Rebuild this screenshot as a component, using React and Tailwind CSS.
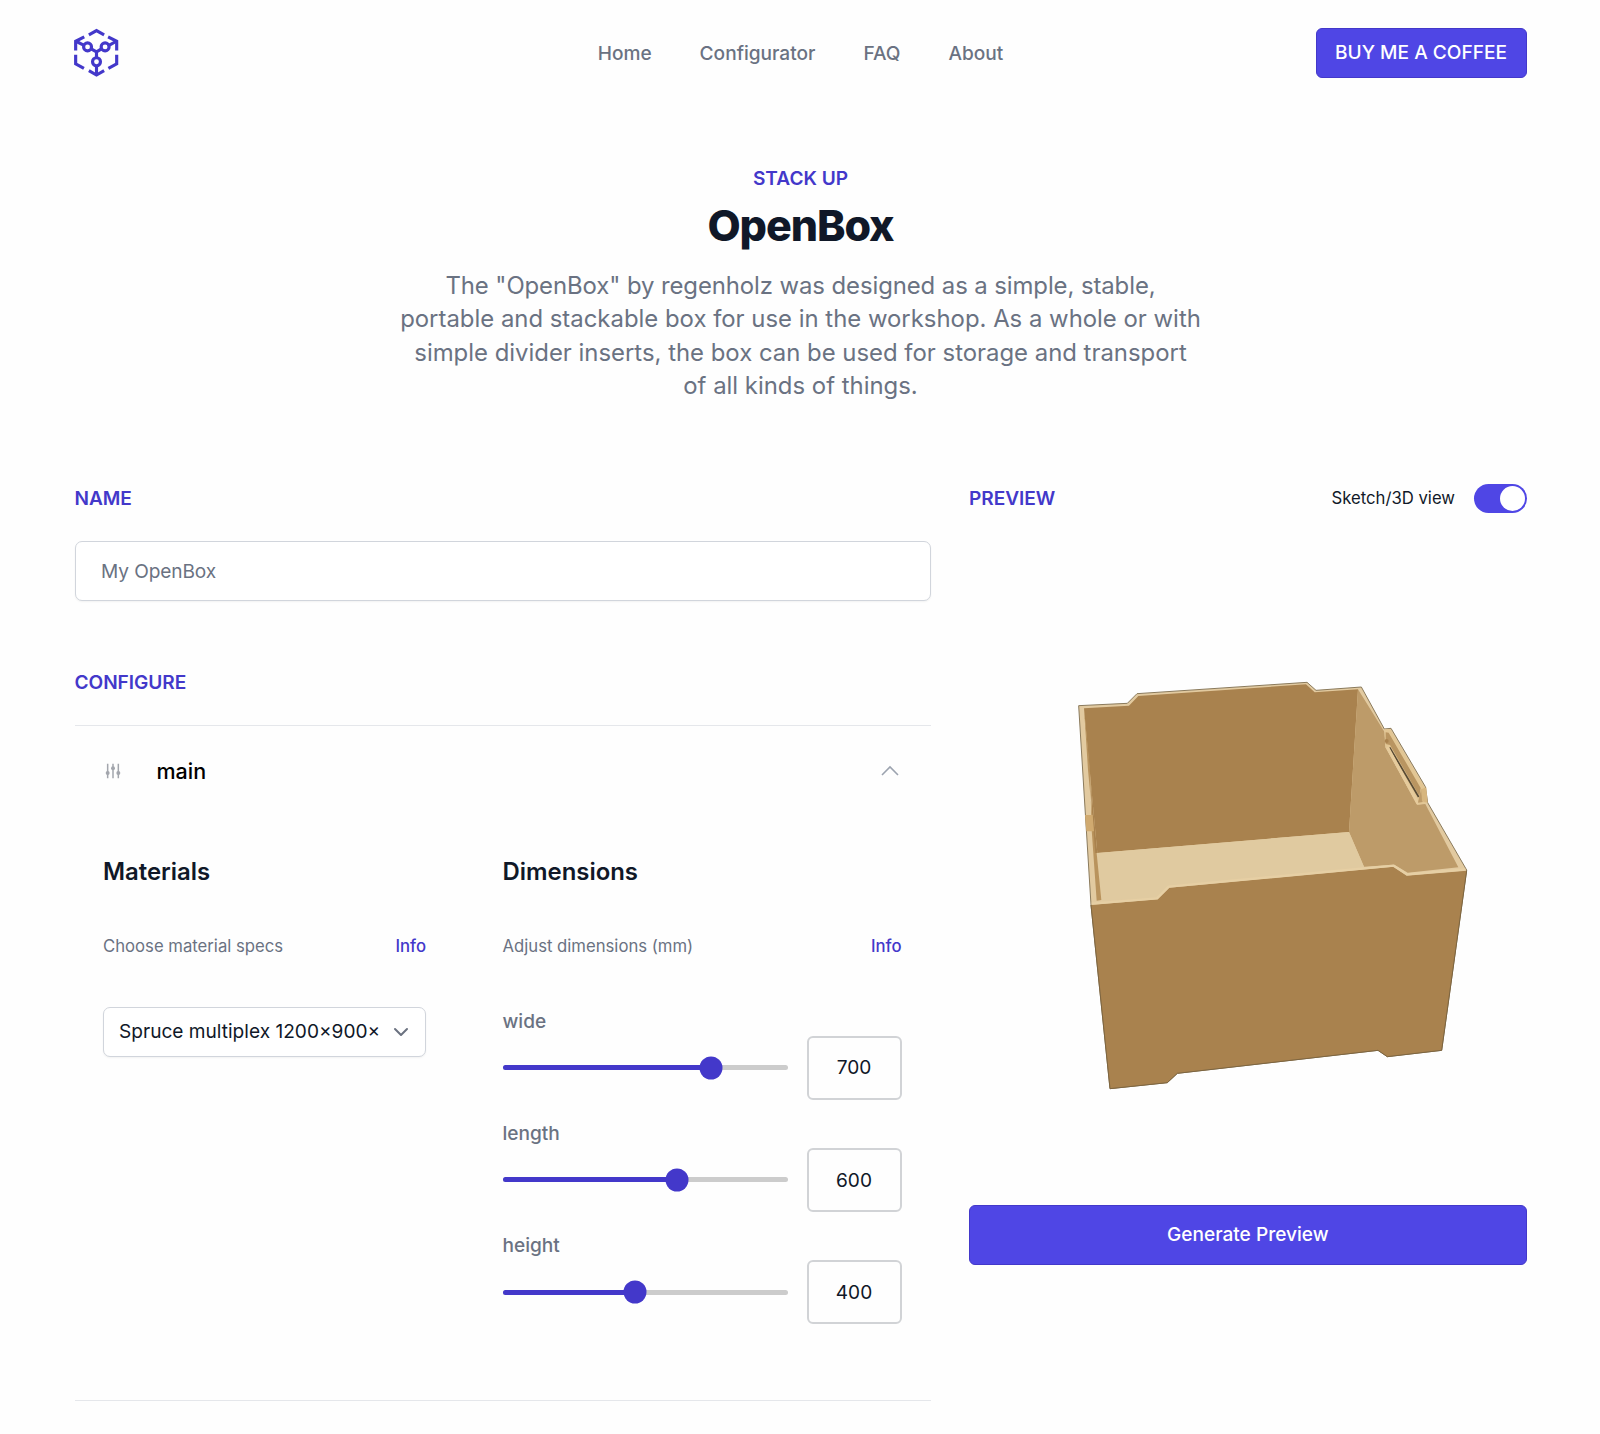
import { useState } from "react";

const NAV = ["Home", "Configurator", "FAQ", "About"];

const DIMENSIONS = [
  { label: "wide", value: 700, percent: 73 },
  { label: "length", value: 600, percent: 61.4 },
  { label: "height", value: 400, percent: 46.4 },
];

function Logo() {
  return (
    <svg className="-ml-px h-[51px] w-[45px]" viewBox="42 20 136 152" fill="none" stroke="#4338ca" strokeWidth="9.5">
      <path d="M87 43 110 30 133 43M145 49 171 62V90M47 90V62L73 49M47 103V130L72 144M171 103V130L146 144M87 151 110 164 133 151" />
      <path d="M48 62 71 74M170 62 149 74M94 85 110 94 125 85M110 94V111M110 137V164" />
      <circle cx="83" cy="79" r="12" />
      <circle cx="136" cy="79" r="12" />
      <circle cx="110" cy="124" r="12" />
    </svg>
  );
}

function SlidersIcon() {
  return (
    <svg className="-ml-px h-[18px] w-[16px]" viewBox="0 0 48 54" fill="none" stroke="#a3a6ad" strokeWidth="4.5">
      <path d="M8 5V49M24 5V49M40 5V49" />
      <g fill="#a3a6ad" stroke="none">
        <circle cx="8" cy="33" r="6" />
        <circle cx="24" cy="19" r="6" />
        <circle cx="40" cy="33" r="6" />
      </g>
    </svg>
  );
}

function BoxModel() {
  return (
    <svg className="block h-[440px] w-[440px]" viewBox="0 0 1320 1320" strokeLinejoin="round">
      {/* silhouette with top edges */}
      <path
        d="M56 137 202 130 231 101 741 67 768 91 904 81 973 207 993 205 1096 380 1103 428 1220 630 1145 1171 982 1190 954 1171 352 1240 322 1268 150 1286 93 735Z"
        fill="#e2caa0"
        stroke="#8a7a5c"
        strokeWidth="3"
      />
      {/* back wall */}
      <path d="M72 145 207 137 235 108 738 73 764 97 894 88 867 516 112 579Z" fill="#a9824e" />
      {/* right wall */}
      <path d="M894 88 973 215 976 262 1072 434 1096 432 1195 622 1043 638 1003 614 912 620 867 516Z" fill="#bd9b69" />
      {/* floor */}
      <path d="M112 579 867 516 912 620 325 677 289 714 122 722Z" fill="#e0caa0" />
      {/* right handle */}
      <path d="M973 208 990 207 1094 382 1100 430 1072 434 977 262Z" fill="#e2c694" />
      <path d="M977 217 986 218 1082 384 1078 408 990 255 977 252Z" fill="#b99561" />
      <circle cx="980" cy="243" r="6" fill="#a9824e" />
      <path d="M989 262 1076 411" stroke="#584a34" strokeWidth="5" />
      <path d="M982 261 1074 431" stroke="#e6cb9c" strokeWidth="9" />
      <path d="M1078 408 1084 386 1088 426 1074 428Z" fill="#bd9b69" />
      <path d="M1084 388 1099 382 1103 428 1086 424Z" fill="#d7b67f" />
      {/* left wall rim */}
      <path d="M72 145 84 330 96 458 104 520 124 720 110 722 95 510 90 330Z" fill="#b9935d" />
      <path d="M72 145 112 579 106 579 96 458 90 330Z" fill="#a9824e" />
      <path d="M75 465H98L102 514H79Z" fill="#d0aa70" />
      {/* front wall */}
      <path
        d="M93 735 293 718 328 683 1000 620 1040 647 1220 632 1145 1171 982 1190 954 1171 352 1240 322 1268 150 1286Z"
        fill="#a9824e"
      />
      <path d="M95 731 291 715 326 680 1001 617 1041 643 1216 628" fill="none" stroke="#e6cfa4" strokeWidth="7" />
      <path
        d="M93 735 150 1286 322 1268 352 1240 954 1171 982 1190 1145 1171 1220 632"
        fill="none"
        stroke="#7d6540"
        strokeWidth="3"
      />
    </svg>
  );
}

function SectionLabel({ children }) {
  return <h2 className="text-[19.1px] leading-[29px] font-semibold tracking-[-0.05px] text-[#4338ca]">{children}</h2>;
}

function Slider({ label, value, percent }) {
  return (
    <div className="h-[112.25px]">
      <div className="h-[29px] text-[19.1px] leading-[29px] font-medium text-gray-500">{label}</div>
      <div className="flex h-[64px] items-center">
        <div className="relative h-[5px] w-[285px] rounded-full bg-[#cccccc]">
          <div className="h-full rounded-full bg-[#4338ca]" style={{ width: percent + "%" }} />
          <div
            className="absolute top-1/2 size-[23px] -translate-x-1/2 -translate-y-1/2 rounded-full bg-[#4338ca]"
            style={{ left: percent + "%" }}
          />
        </div>
        <div className="ml-[19px] flex h-[64px] w-[95px] items-center justify-center rounded-[6px] border-2 border-[#d1d3d6] text-[19.1px] text-gray-900">
          {value}
        </div>
      </div>
    </div>
  );
}

function Hint({ text }) {
  return (
    <div className="mt-[44px] flex h-[28px] items-center justify-between text-[16.7px]">
      <span className="text-gray-500">{text}</span>
      <a className="font-medium text-[#4338ca]">Info</a>
    </div>
  );
}

export default function App() {
  const [on, setOn] = useState(true);
  return (
    <div className="h-[1434px] w-[1600px] overflow-hidden bg-[#fefefe] pr-[73.5px] pl-[74.5px] font-['Inter',sans-serif] text-gray-900">
      <header className="flex h-[105px] items-center justify-between">
        <div className="w-[211px]">
          <Logo />
        </div>
        <nav className="flex gap-12 pt-px text-[19.1px] font-medium text-gray-500">
          {NAV.map((n) => (
            <a key={n}>{n}</a>
          ))}
        </nav>
        <button className="h-[50px] w-[211px] rounded-[6px] border border-[#4338ca] bg-[#4f46e5] text-[19.1px] font-medium text-white">
          BUY ME A COFFEE
        </button>
      </header>

      <section className="pt-[59px] text-center">
        <p className="text-[19.1px] leading-[29px] font-semibold text-[#4338ca]">STACK UP</p>
        <h1 className="mt-[8px] text-[43px] leading-[48px] font-extrabold tracking-[-1.08px] text-gray-900">OpenBox</h1>
        <p className="mx-auto mt-[20px] w-[820px] text-[23.9px] leading-[33.4px] text-gray-500">
          <span className="tracking-[-0.08px]">The "OpenBox" by regenholz was designed as a simple, stable,</span>
          <br />
          portable and stackable box for use in the workshop. As a whole or with
          <br />
          simple divider inserts, the box can be used for storage and transport
          <br />
          of all kinds of things.
        </p>
      </section>

      <main className="mt-[81px] flex justify-between">
        <div className="w-[856px]">
          <SectionLabel>NAME</SectionLabel>
          <div className="mt-[28px] flex h-[60px] items-center rounded-[7px] border border-gray-300 bg-white px-[25.5px] pt-px text-[19.1px] tracking-[-0.1px] text-gray-500 shadow-xs">
            My OpenBox
          </div>
          <div className="mt-[67px]">
            <SectionLabel>CONFIGURE</SectionLabel>
          </div>
          <div className="mt-[28px] h-[676px] border-y border-gray-200">
            <div className="flex h-[91px] items-center px-[31px]">
              <SlidersIcon />
              <span className="ml-[36px] text-[21.5px] font-medium text-black">main</span>
              <svg className="ml-auto h-[12px] w-[20px]" viewBox="0 0 20 12" fill="none" stroke="#9ca3af" strokeWidth="1.6">
                <path d="M2 10 10 2 18 10" />
              </svg>
            </div>
            <div className="flex pl-[28.5px]">
              <div className="w-[323px] pt-[38px]">
                <h3 className="h-[34px] text-[23.9px] leading-[34px] font-semibold">Materials</h3>
                <Hint text="Choose material specs" />
                <div className="mt-[46px] flex h-[50px] items-center justify-between rounded-[7px] border border-gray-300 bg-white pr-[16px] pl-[15px] text-[19.1px] shadow-xs">
                  <span className="w-[262px] overflow-hidden whitespace-nowrap">Spruce multiplex 1200×900×</span>
                  <svg className="h-[10px] w-[16px]" viewBox="0 0 16 10" fill="none" stroke="#6b7280" strokeWidth="2" strokeLinecap="round" strokeLinejoin="round">
                    <path d="M2 2 8 8 14 2" />
                  </svg>
                </div>
              </div>
              <div className="ml-[76.5px] w-[399px] pt-[38px]">
                <h3 className="h-[34px] text-[23.9px] leading-[34px] font-semibold">Dimensions</h3>
                <Hint text="Adjust dimensions (mm)" />
                <div className="mt-[46px]">
                  {DIMENSIONS.map((d) => (
                    <Slider key={d.label} {...d} />
                  ))}
                </div>
              </div>
            </div>
          </div>
        </div>

        <aside className="w-[557.5px]">
          <div className="flex h-[29px] items-center justify-between">
            <SectionLabel>PREVIEW</SectionLabel>
            <div className="flex items-center gap-[19px]">
              <span className="pt-px text-[16.7px] text-gray-900">Sketch/3D view</span>
              <button
                onClick={() => setOn(!on)}
                className={
                  on
                    ? "flex h-[29px] w-[52.5px] items-center justify-end rounded-full bg-[#4f46e5] p-[2px]"
                    : "flex h-[29px] w-[52.5px] items-center justify-start rounded-full bg-gray-200 p-[2px]"
                }
              >
                <span className="size-[25px] rounded-full bg-white" />
              </button>
            </div>
          </div>
          <div className="h-[692px] pt-[147px] pl-[91px]">
            <BoxModel />
          </div>
          <button className="h-[60px] w-full rounded-[6px] border border-[#4338ca] bg-[#4f46e5] text-[19.1px] font-medium text-white">
            Generate Preview
          </button>
        </aside>
      </main>
    </div>
  );
}
